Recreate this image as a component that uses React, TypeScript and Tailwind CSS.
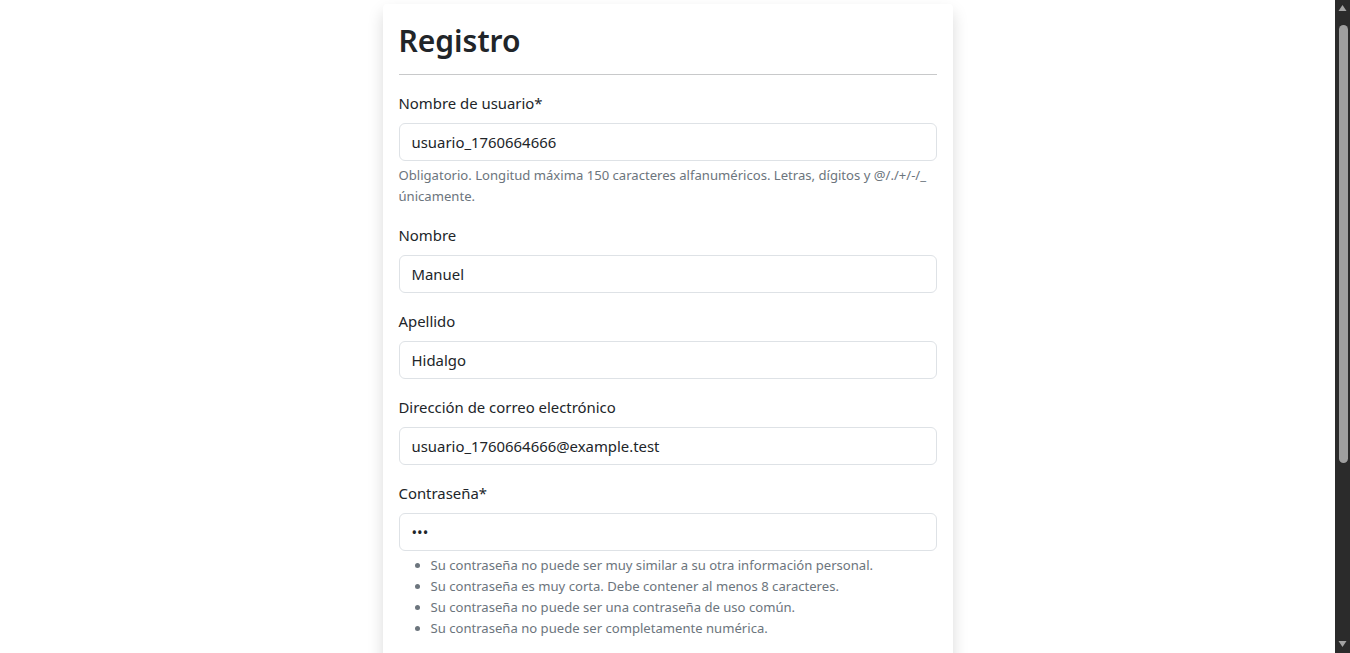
import React from "react";

const font = { fontFamily: '"Noto Sans", "Segoe UI", Roboto, sans-serif' };

function Field({
  label,
  value,
  type = "text",
  children,
}: {
  label: string;
  value: string;
  type?: string;
  children?: React.ReactNode;
}) {
  return (
    <div className="mb-4">
      <label className="block mb-2 text-[14.9px] leading-[24px] text-[#212529]">{label}</label>
      <input
        type={type}
        readOnly
        value={value}
        className="block w-full h-[38px] px-3 py-[6px] text-[14.9px] leading-[24px] text-[#212529] bg-white border border-[#dee2e6] rounded-[6px] outline-none"
      />
      {children}
    </div>
  );
}

function Scrollbar() {
  return (
    <div className="w-[15px] h-full shrink-0 bg-[#2b2b2b] flex flex-col items-center">
      <svg width="15" height="17" viewBox="0 0 15 17" className="shrink-0">
        <polygon points="3.5,11 7.5,5 11.5,11" fill="#a3a3a3" />
      </svg>
      <div className="w-[9px] h-[438px] mt-[8px] ml-[1px] rounded-t-[5px] rounded-b-[5px] bg-[#9f9f9f] shrink-0" />
      <div className="flex-1" />
      <svg width="15" height="17" viewBox="0 0 15 17" className="shrink-0">
        <polygon points="3.5,5 11.5,5 7.5,11" fill="#a3a3a3" />
      </svg>
    </div>
  );
}

export default function App() {
  return (
    <div className="h-screen flex bg-white overflow-hidden" style={font}>
      <div className="flex-1 h-full overflow-hidden">
        <div className="w-[570px] mx-auto mt-1 bg-white p-4 shadow-[0_8px_16px_rgba(0,0,0,0.15)] rounded-[4px]">
          <h2 className="pt-[2px] text-[30px] leading-[38.4px] font-semibold text-[#212529]">Registro</h2>
          <hr className="mt-[14px] mb-4 border-0 border-t border-[#c8c9ca]" />
          <form>
            <Field label="Nombre de usuario*" value="usuario_1760664666">
              <div className="mt-1 text-[13.1px] leading-[21px] text-[#6c757d]">
                Obligatorio. Longitud máxima 150 caracteres alfanuméricos. Letras, dígitos y @/./+/-/_ únicamente.
              </div>
            </Field>
            <Field label="Nombre" value="Manuel" />
            <Field label="Apellido" value="Hidalgo" />
            <Field label="Dirección de correo electrónico" value="usuario_1760664666@example.test" />
            <Field label="Contraseña*" value="abc" type="password">
              <div className="mt-1 pb-4 text-[13.1px] leading-[21px] text-[#6c757d]">
                <ul className="list-disc pl-8">
                  <li>Su contraseña no puede ser muy similar a su otra información personal.</li>
                  <li>Su contraseña es muy corta. Debe contener al menos 8 caracteres.</li>
                  <li>Su contraseña no puede ser una contraseña de uso común.</li>
                  <li>Su contraseña no puede ser completamente numérica.</li>
                </ul>
              </div>
            </Field>
            <Field label="Confirmación de contraseña*" value="abc" type="password">
              <div className="mt-1 text-[13.1px] leading-[21px] text-[#6c757d]">
                Para verificar, introduzca la misma contraseña anterior.
              </div>
            </Field>
            <button
              type="button"
              className="w-full h-[38px] rounded-[6px] bg-[#0d6efd] text-white text-[14.9px]"
            >
              Registrarse
            </button>
          </form>
        </div>
      </div>
      <Scrollbar />
    </div>
  );
}
